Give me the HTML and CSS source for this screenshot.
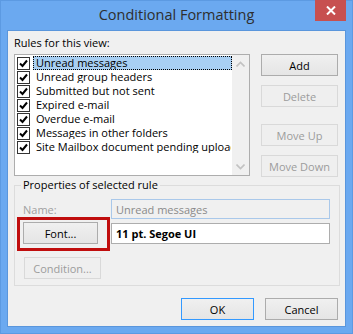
FILE: index.html
```html
<!DOCTYPE html>
<html lang="en">
<head>
  <meta charset="UTF-8">
  <meta name="viewport" content="width=device-width, initial-scale=1.0">
  <title>Conditional Formatting</title>
  <link rel="stylesheet" href="styles.css">
</head>
<body>
  <div class="window">
    <div class="titlebar">
      <span class="title">Conditional Formatting</span>
      <div class="close">
        <svg width="10" height="9" viewBox="0 0 10 9">
          <path d="M1 0.5 L9 8.5 M9 0.5 L1 8.5" stroke="#fff" stroke-width="2" fill="none"/>
        </svg>
      </div>
    </div>

    <div class="client">
      <div class="rules">
        <div class="rules-left">
          <div class="label">Rules for this view:</div>
          <div class="listbox">
            <ul class="items">
              <li class="item selected"><span class="check"></span><span class="text">Unread messages</span></li>
              <li class="item"><span class="check"></span><span class="text">Unread group headers</span></li>
              <li class="item"><span class="check"></span><span class="text">Submitted but not sent</span></li>
              <li class="item"><span class="check"></span><span class="text">Expired e-mail</span></li>
              <li class="item"><span class="check"></span><span class="text">Overdue e-mail</span></li>
              <li class="item"><span class="check"></span><span class="text">Messages in other folders</span></li>
              <li class="item"><span class="check"></span><span class="text">Site Mailbox document pending upload</span></li>
            </ul>
            <div class="scrollbar">
              <svg width="9" height="6" viewBox="0 0 9 6"><path d="M0.5 5.5 L4.5 1.5 L8.5 5.5" stroke="#c2c2c2" stroke-width="1.6" fill="none"/></svg>
              <svg width="9" height="6" viewBox="0 0 9 6"><path d="M0.5 0.5 L4.5 4.5 L8.5 0.5" stroke="#c2c2c2" stroke-width="1.6" fill="none"/></svg>
            </div>
          </div>
        </div>

        <div class="side-buttons">
          <button class="btn">Add</button>
          <button class="btn" disabled>Delete</button>
          <button class="btn move-up" disabled>Move Up</button>
          <button class="btn" disabled>Move Down</button>
        </div>
      </div>

      <div class="group">
        <span class="group-title">Properties of selected rule</span>
        <div class="row name-row">
          <span class="name-label">Name:</span>
          <div class="field field-disabled">Unread messages</div>
        </div>
        <div class="row font-row">
          <div class="marked">
            <button class="btn font-btn">Font...</button>
          </div>
          <div class="field font-field">11 pt. Segoe UI</div>
        </div>
        <div class="row">
          <button class="btn condition-btn" disabled>Condition...</button>
        </div>
      </div>

      <div class="footer">
        <button class="btn default">OK</button>
        <button class="btn">Cancel</button>
      </div>
    </div>
  </div>
</body>
</html>
```

FILE: styles.css
```css
* {
  margin: 0;
  padding: 0;
  box-sizing: border-box;
}

body {
  font-family: 'Open Sans', 'Noto Sans', sans-serif;
  font-size: 11px;
  color: #000;
  background-color: #6ba9f0;
}

.window {
  width: 353px;
  height: 334px;
  background-color: #6ba9f0;
  box-shadow: inset 0 0 0 1px #5c9ae2;
  display: flex;
  flex-direction: column;
}

/* barra de titulo */
.titlebar {
  position: relative;
  height: 30px;
  display: flex;
  justify-content: center;
  align-items: center;
}

.title {
  font-size: 14.5px;
  color: #2e2e2e;
  margin-top: -1px;
}

.close {
  position: absolute;
  top: 0;
  right: 7px;
  width: 31px;
  height: 21px;
  background-color: #c75050;
  display: flex;
  align-items: center;
  justify-content: center;
}

/* area interna */
.client {
  flex: 1;
  margin: 0 7px 7px 7px;
  background-color: #f0f0f0;
  border: 1px solid #5a96dc;
  padding: 0 6px;
}

.rules {
  display: flex;
}

.rules-left {
  width: 236px;
}

.label {
  line-height: 16px;
  padding-top: 4px;
  margin-bottom: 3px;
}

.listbox {
  height: 122px;
  background-color: #fff;
  border: 1px solid #adadad;
  display: flex;
}

.items {
  list-style: none;
  flex: 1;
  min-width: 0;
  padding-top: 1px;
  overflow: hidden;
}

.item {
  height: 14px;
  display: flex;
  align-items: center;
  padding-left: 2px;
  white-space: nowrap;
}

.check {
  width: 13px;
  height: 13px;
  flex: none;
  border: 1px solid #333;
  background: #fff url("data:image/svg+xml;utf8,<svg xmlns='http://www.w3.org/2000/svg' width='11' height='11'><path d='M2 5.5 L4.5 8 L9 2.5' stroke='black' stroke-width='2' fill='none'/></svg>") no-repeat center;
}

.text {
  margin-left: 3px;
  padding: 0 2px;
  height: 14px;
  line-height: 12px;
  border: 1px solid transparent;
  overflow: hidden;
}

.selected .text {
  flex: 1;
  background-color: #a8cff3;
  border: 1px dotted #000;
}

.scrollbar {
  width: 17px;
  flex: none;
  background-color: #f0f0f0;
  display: flex;
  flex-direction: column;
  justify-content: space-between;
  align-items: center;
  padding: 6px 0 5px;
}

.side-buttons {
  margin-left: 11px;
  padding-top: 23px;
  display: flex;
  flex-direction: column;
  gap: 9px;
}

.btn {
  font-family: inherit;
  font-size: 11px;
  width: 77px;
  height: 22px;
  border: 1px solid #acacac;
  background: linear-gradient(#f0f0f0, #e5e5e5);
  color: #000;
}

.btn:disabled {
  border-color: #d9d9d9;
  background: #efefef;
  color: #9c9c9c;
}

.side-buttons .move-up {
  margin-top: 8px;
}

/* grupo de propriedades */
.group {
  position: relative;
  margin-top: 8px;
  width: 326px;
  height: 101px;
  border: 1px solid #dcdcdc;
  padding: 13px 9px 0 8px;
}

.group-title {
  position: absolute;
  top: -9px;
  left: 6px;
  padding: 0 2px;
  background-color: #f0f0f0;
  line-height: 16px;
}

.row {
  display: flex;
  align-items: center;
}

.name-label {
  width: 88px;
  color: #a0a0a0;
}

.field {
  width: 219px;
  height: 20px;
  padding-left: 4px;
  display: flex;
  align-items: center;
}

.field-disabled {
  border: 1px solid #a9c8ea;
  color: #8a8a8a;
}

.font-row {
  margin-top: 3px;
}

.marked {
  position: relative;
  width: 88px;
}

.marked::after {
  content: "";
  position: absolute;
  left: -6px;
  right: 1px;
  top: -5px;
  bottom: -7px;
  border: 3px solid #c00d0d;
}

.font-btn {
  width: 75px;
  display: block;
}

.font-field {
  height: 21px;
  background-color: #fff;
  border: 1px solid #adadad;
  font-weight: bold;
}

.condition-btn {
  margin-top: 13px;
  margin-left: 1px;
}

/* botoes finais */
.footer {
  display: flex;
  justify-content: flex-end;
  gap: 11px;
  margin-top: 12px;
  padding-right: 1px;
}

.footer .btn {
  width: 73px;
}

.btn.default {
  border-color: #3399ff;
}
```
